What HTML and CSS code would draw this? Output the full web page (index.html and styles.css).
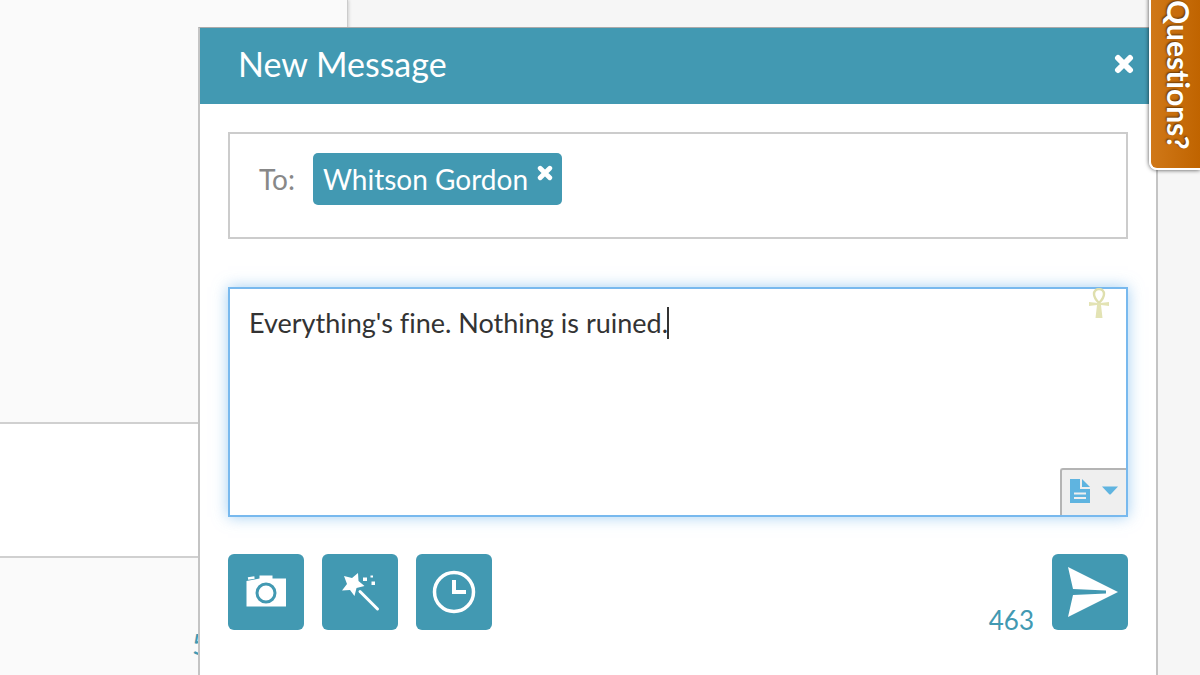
FILE: index.html
```html
<!DOCTYPE html>
<html lang="en">
<head>
    <meta charset="UTF-8">
    <meta name="viewport" content="width=device-width, initial-scale=1.0">
    <title>New Message</title>
    <link rel="stylesheet" href="styles.css">
</head>
<body>

    <main class="feed">
        <div class="feed-top"></div>
        <div class="feed-item"></div>
        <div class="feed-footer">5</div>
    </main>

    <section class="dialog" role="dialog" aria-labelledby="dialog-title">
        <header class="dialog-header">
            <h1 id="dialog-title">New Message</h1>
            <button type="button" class="close" aria-label="Close">
                <svg width="20" height="20" viewBox="0 0 20 20"><path d="M4 4l12 12M16 4l-12 12" stroke="#fff" stroke-width="6" stroke-linecap="round"/></svg>
            </button>
        </header>

        <form class="dialog-body">
            <div class="recipients">
                <span class="to-label">To:</span>
                <span class="chip">
                    Whitson Gordon
                    <button type="button" class="chip-remove" aria-label="Remove recipient">
                        <svg width="16" height="16" viewBox="0 0 20 20"><path d="M4 4l12 12M16 4l-12 12" stroke="#fff" stroke-width="6" stroke-linecap="round"/></svg>
                    </button>
                </span>
            </div>

            <div class="message">
                <textarea class="message-text" aria-label="Message">Everything's fine. Nothing is ruined.</textarea>
                <span class="caret"></span>
                <svg class="ankh" width="22" height="32" viewBox="0 0 22 32" fill="none">
                    <path d="M11 15C7 11 6 8 6 6a5 5 0 0 1 10 0c0 2-1 5-5 9z" stroke="#dfdfae" stroke-width="2.4"/>
                    <path d="M1 14l9 1h2l9-1v4l-8-1 1.500 13h-7l1.500-13-8 1z" fill="#e3e3b4"/>
                </svg>
                <button type="button" class="templates" aria-label="Templates">
                    <svg width="20" height="24" viewBox="0 0 20 24">
                        <path d="M0 0h10v10h10v14H0z" fill="#5fb4e0"/>
                        <path d="M12 0l8 8h-8z" fill="#5fb4e0"/>
                        <path d="M4 14.500h12M4 19h12" stroke="#efefef" stroke-width="2"/>
                    </svg>
                    <svg width="16" height="9" viewBox="0 0 16 9"><path d="M0 .5h16L9 8q-1 1-2 0z" fill="#5fb4e0"/></svg>
                </button>
            </div>

            <div class="actions">
                <button type="button" class="action" aria-label="Add photo">
                    <svg width="76" height="76" viewBox="0 0 76 76">
                        <path d="M18.500 27l8-1.500 5-1V21.500h13v3h13.500v28H18.500z" fill="#fff"/>
                        <path d="M20 24.500l6.500-1" stroke="#fff" stroke-width="2.500"/>
                        <circle cx="38" cy="39" r="9" fill="#fff" stroke="#4299b2" stroke-width="3"/>
                    </svg>
                </button>
                <button type="button" class="action" aria-label="Magic wand">
                    <svg width="76" height="76" viewBox="0 0 76 76">
                        <path d="M22 22l8 2 6-5 .5 8 6 5-8 2-2 8-4.500-6-8 .5 5-6.500z" fill="#fff"/>
                        <path d="M38 37.500l17.500 17.500" stroke="#fff" stroke-width="3" stroke-linecap="round"/>
                        <path d="M41 23.500h4v3.500h-4zM48.500 21.500h2.500v2H48.500zM49.500 27.500h3.500v3.500h-3.500z" fill="#fff"/>
                    </svg>
                </button>
                <button type="button" class="action" aria-label="Schedule">
                    <svg width="76" height="76" viewBox="0 0 76 76" fill="none" stroke="#fff">
                        <circle cx="38" cy="38" r="19.500" stroke-width="3.500"/>
                        <path d="M38 26v12h12" stroke-width="4"/>
                    </svg>
                </button>
                <span class="counter">463</span>
                <button type="submit" class="action" aria-label="Send">
                    <svg width="76" height="76" viewBox="0 0 76 76">
                        <path d="M16 13l50 25-50 25 5-22 33-1.500v-3L21 35z" fill="#fff"/>
                    </svg>
                </button>
            </div>
        </form>
    </section>

    <button type="button" class="questions">Questions?</button>

</body>
</html>
```

FILE: styles.css
```css
* {
    box-sizing: border-box;
}
body {
    font-family: Lato, 'Liberation Sans', sans-serif;
    font-size: 28px;
    font-variant-ligatures: none;
    background-color: #f6f6f6;
    margin: 0;
    min-height: 100vh;
    overflow: hidden;
}
button {
    padding: 0;
    border: none;
    background: none;
    cursor: pointer;
}
svg {
    display: block;
}

/* page behind the dialog */
.feed {
    display: flex;
    flex-direction: column;
    width: 29%;
    height: 100vh;
    background-color: #fafafa;
    border-right: 1px solid #ccc;
    box-shadow: 1px 0 3px rgba(0, 0, 0, 0.15);
}
.feed-top {
    flex: 1;
}
.feed-item {
    height: 136px;
    background-color: #fff;
    border-top: 2px solid #d0d0d0;
    border-bottom: 2px solid #d0d0d0;
}
.feed-footer {
    height: 117px;
    padding: 68px 0 0 192px;
    line-height: 36px;
    color: #4299b2;
}

/* dialog */
.dialog {
    position: absolute;
    top: 27px;
    left: 198px;
    right: 42px;
    min-height: 100vh;
    background-color: #fff;
    border: 2px solid #c4c4c4;
    border-top: 1px solid #aaa;
}
.dialog-header {
    display: flex;
    align-items: center;
    justify-content: space-between;
    height: 76px;
    padding: 0 22px 4px 38px;
    background-color: #4299b2;
}
.dialog-header h1 {
    margin: 0;
    font-size: 34px;
    line-height: 40px;
    font-weight: normal;
    color: #fff;
}
.dialog-body {
    padding: 28px;
}
.recipients {
    display: flex;
    align-items: flex-start;
    gap: 18px;
    min-height: 107px;
    padding: 19px 29px;
    border: 2px solid #ccc;
}
.to-label {
    line-height: 52px;
    color: #888;
}
.chip {
    display: flex;
    gap: 9px;
    height: 52px;
    padding: 0 9px 0 10px;
    line-height: 52px;
    color: #fff;
    background-color: #4299b2;
    border-radius: 5px;
}
.chip-remove {
    align-self: flex-start;
    margin-top: 12px;
}
.message {
    position: relative;
    height: 230px;
    margin-top: 48px;
}
.message-text {
    display: block;
    width: 100%;
    height: 100%;
    padding: 16px 19px;
    border: 2px solid #78b9ee;
    box-shadow: 0 0 14px rgba(102, 175, 233, 0.6);
    outline: none;
    resize: none;
    font-family: inherit;
    font-size: 27px;
    font-variant-ligatures: none;
    line-height: 36px;
    color: #333;
}
.caret {
    position: absolute;
    top: 20px;
    left: 439px;
    width: 2px;
    height: 32px;
    background-color: #333;
}
.ankh {
    position: absolute;
    top: 1px;
    right: 18px;
}
.templates {
    position: absolute;
    right: 2px;
    bottom: 2px;
    display: flex;
    align-items: center;
    justify-content: center;
    gap: 12px;
    width: 66px;
    height: 47px;
    padding-bottom: 4px;
    background-color: #efefef;
    border-top: 2px solid #b4b4b4;
    border-left: 2px solid #b4b4b4;
    border-top-left-radius: 3px;
}
.actions {
    display: flex;
    gap: 18px;
    margin-top: 37px;
}
.action {
    width: 76px;
    height: 76px;
    background-color: #4299b2;
    border-radius: 6px;
}
.counter {
    align-self: flex-end;
    margin-left: auto;
    font-size: 26px;
    line-height: 20px;
    color: #4299b2;
}

/* help tab on the window's edge */
.questions {
    position: absolute;
    top: -20px;
    right: 0;
    width: 51px;
    height: 190px;
    padding: 0 0 18px 6px;
    writing-mode: vertical-rl;
    text-align: right;
    font-family: inherit;
    font-size: 30px;
    font-variant-ligatures: none;
    font-weight: bold;
    color: #fff;
    text-shadow: -1px 1px 2px rgba(0, 0, 0, 0.5);
    background: linear-gradient(to right, #d07818, #c06400);
    border: 2px solid #fff;
    border-right: none;
    border-bottom-left-radius: 8px;
    box-shadow: 0 0 4px rgba(0, 0, 0, 0.7);
}
```
